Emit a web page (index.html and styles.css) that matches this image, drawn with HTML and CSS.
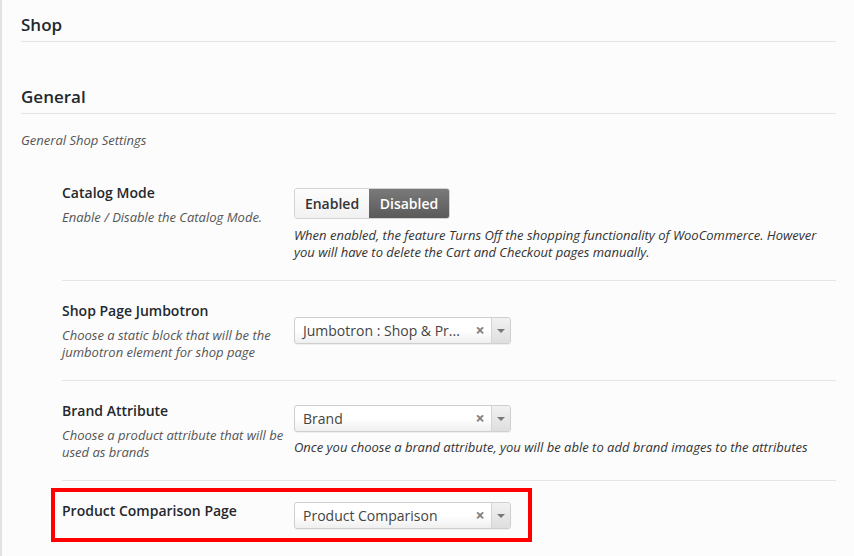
FILE: index.html
```html
<!DOCTYPE html>
<html lang="en">
<head>
<meta charset="utf-8">
<title>Shop Settings</title>
<link rel="stylesheet" href="styles.css">
</head>
<body>
<div class="page">
  <h2 class="section-title">Shop</h2>
  <h2 class="section-title general">General</h2>
  <p class="section-desc">General Shop Settings</p>

  <div class="row row-catalog">
    <div class="label-col">
      <div class="label">Catalog Mode</div>
      <div class="desc">Enable / Disable the Catalog Mode.</div>
    </div>
    <div class="field-col">
      <div class="btn-group">
        <span class="btn">Enabled</span><span class="btn active">Disabled</span>
      </div>
      <div class="help">When enabled, the feature Turns Off the shopping functionality of WooCommerce. However<br>you will have to delete the Cart and Checkout pages manually.</div>
    </div>
  </div>

  <div class="row row-jumbo">
    <div class="label-col">
      <div class="label">Shop Page Jumbotron</div>
      <div class="desc">Choose a static block that will be the<br>jumbotron element for shop page</div>
    </div>
    <div class="field-col">
      <div class="select">
        <span class="select-text">Jumbotron : Shop &amp; Pr...</span>
        <span class="select-clear">×</span>
        <span class="select-arrow"><b></b></span>
      </div>
    </div>
  </div>

  <div class="row row-brand">
    <div class="label-col">
      <div class="label">Brand Attribute</div>
      <div class="desc">Choose a product attribute that will be<br>used as brands</div>
    </div>
    <div class="field-col">
      <div class="select">
        <span class="select-text">Brand</span>
        <span class="select-clear">×</span>
        <span class="select-arrow"><b></b></span>
      </div>
      <div class="help help-brand">Once you choose a brand attribute, you will be able to add brand images to the attributes</div>
    </div>
  </div>

  <div class="row row-compare">
    <div class="highlight"></div>
    <div class="label-col">
      <div class="label">Product Comparison Page</div>
    </div>
    <div class="field-col">
      <div class="select">
        <span class="select-text">Product Comparison</span>
        <span class="select-clear">×</span>
        <span class="select-arrow"><b></b></span>
      </div>
    </div>
  </div>
</div>
</body>
</html>
```

FILE: styles.css
```css
html, body {
  margin: 0;
  padding: 0;
}
body {
  background: #fcfcfc;
  font-family: "Open Sans", "Liberation Sans", sans-serif;
  color: #23282d;
  height: 556px;
  overflow: hidden;
}
.page {
  border-left: 2px solid #e2e2e2;
  min-height: 556px;
  padding: 13px 18px 0 19px;
  box-sizing: border-box;
}
.section-title {
  margin: 0;
  font-size: 17px;
  font-weight: 600;
  line-height: 24px;
  padding-bottom: 4px;
  border-bottom: 1px solid #e5e5e5;
  color: #23282d;
}
.section-title.general {
  margin-top: 43px;
}
.section-desc {
  margin: 17px 0 0;
  font-size: 13px;
  font-style: italic;
  line-height: 18px;
  color: #555;
}
.row {
  position: relative;
  display: flex;
  margin-left: 41px;
  padding: 21px 0 19px;
  border-bottom: 1px solid #e5e5e5;
}
.row-catalog {
  margin-top: 14px;
}
.row-compare {
  border-bottom: none;
}
.label-col {
  width: 232px;
  flex: none;
}
.label {
  font-size: 14px;
  font-weight: 600;
  line-height: 18px;
  color: #23282d;
}
.desc {
  margin-top: 7px;
  font-size: 13px;
  font-style: italic;
  line-height: 17px;
  color: #555;
}
.field-col {
  flex: 1;
}
.row-catalog .field-col { padding-top: 4px; }
.row-jumbo .field-col { padding-top: 15px; }
.row-brand .field-col { padding-top: 3px; }
.help {
  margin-top: 8px;
  font-size: 13px;
  font-style: italic;
  line-height: 17px;
  color: #333;
}
.help-brand {
  margin-top: 7px;
}
.btn-group {
  display: inline-flex;
  height: 31px;
  border-radius: 3px;
  overflow: hidden;
  border: 1px solid #d3d3d3;
  box-sizing: border-box;
}
.btn {
  display: flex;
  align-items: center;
  justify-content: center;
  font-size: 14px;
  font-weight: 600;
  color: #333;
  background: linear-gradient(#fdfdfd, #f1f1f1);
  width: 74px;
}
.btn.active {
  width: 80px;
  color: #fff;
  background: linear-gradient(#7a7a7a, #5a5a5a);
}
.select {
  display: flex;
  align-items: center;
  width: 217px;
  height: 27px;
  box-sizing: border-box;
  border: 1px solid #cfcfcf;
  border-radius: 3px;
  background: linear-gradient(#ffffff 50%, #efefef);
  box-shadow: 0 1px 1px rgba(0,0,0,0.06);
}
.select-text {
  flex: 1;
  padding-left: 8px;
  font-size: 14px;
  color: #444;
  white-space: nowrap;
  overflow: hidden;
}
.select-clear {
  width: 14px;
  font-size: 16px;
  font-weight: 700;
  color: #808080;
  line-height: 1;
  margin-right: 4px;
  margin-top: -2px;
  text-align: center;
}
.select-arrow {
  align-self: stretch;
  width: 18px;
  border-left: 1px solid #d5d5d5;
  background: linear-gradient(#f1f1f1, #dedede);
  border-radius: 0 2px 2px 0;
  display: flex;
  align-items: center;
  justify-content: center;
}
.select-arrow b {
  width: 0;
  height: 0;
  border-left: 4px solid transparent;
  border-right: 4px solid transparent;
  border-top: 4px solid #777;
  margin-top: 1px;
}
.highlight {
  position: absolute;
  left: -11px;
  top: 7px;
  width: 481px;
  height: 54px;
  border: 4px solid #f00;
  box-sizing: border-box;
  pointer-events: none;
}
```
